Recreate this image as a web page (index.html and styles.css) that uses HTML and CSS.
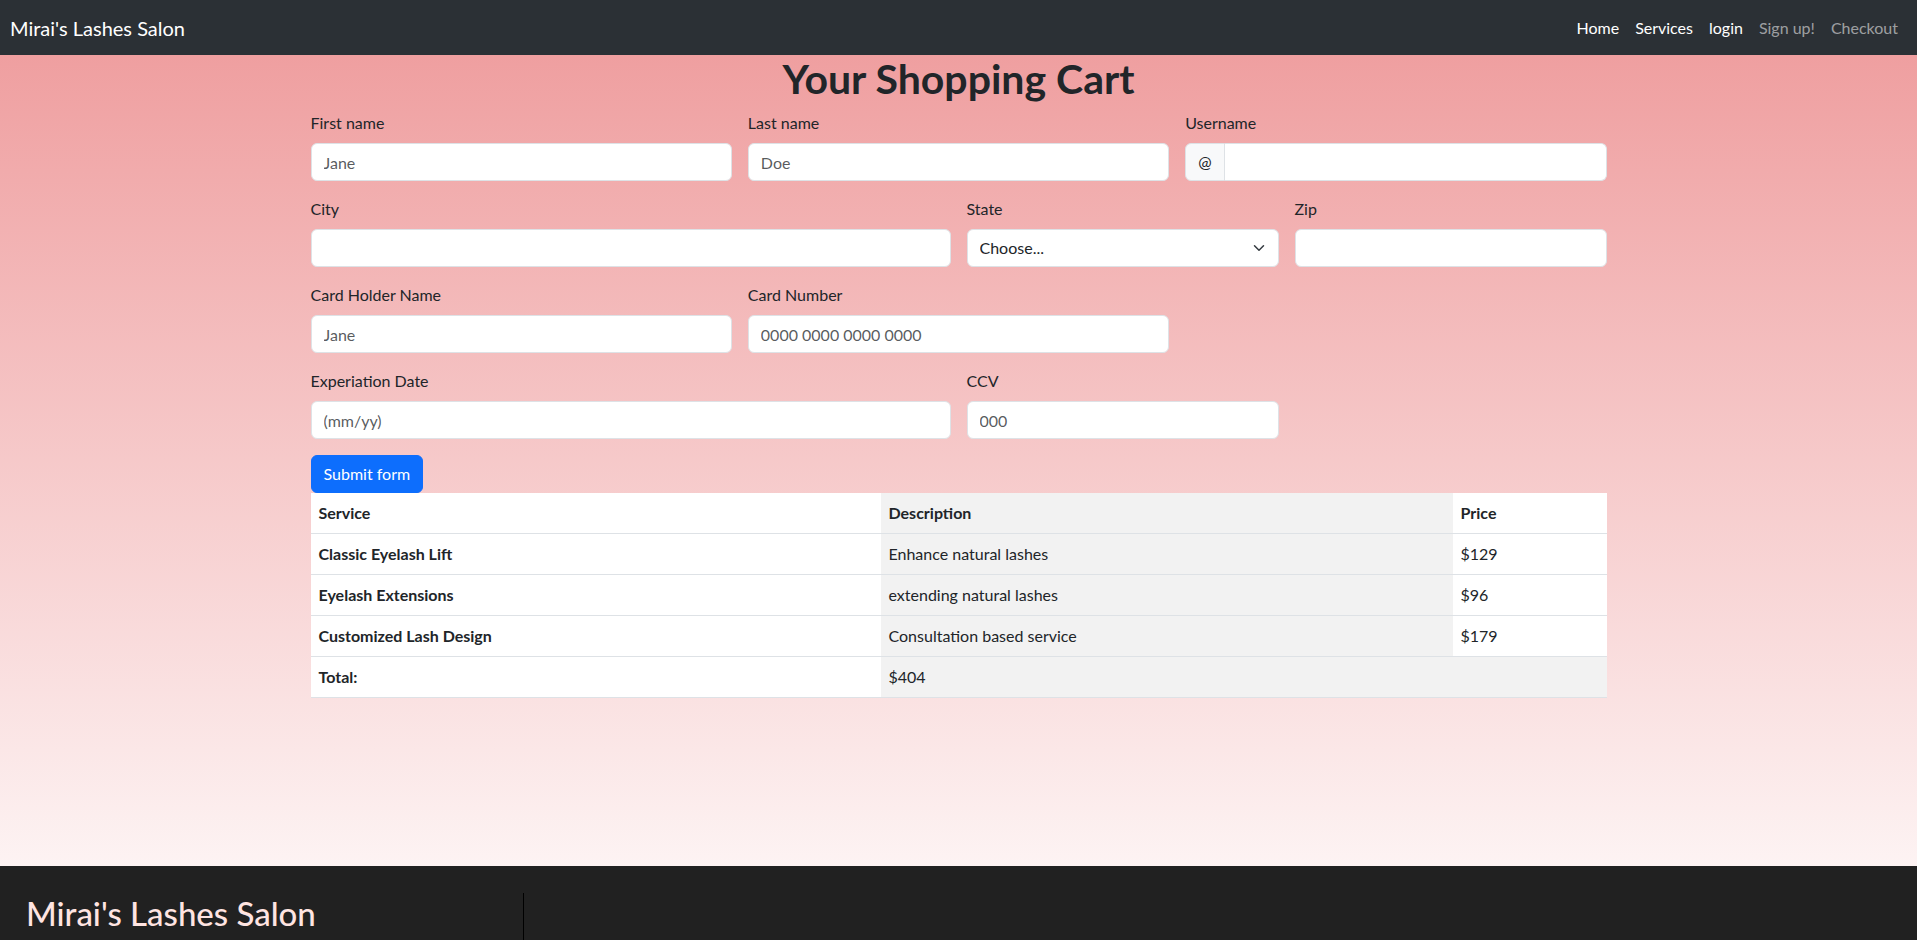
FILE: index.html
```html
<!DOCTYPE html>
<html lang="en">
<head>
<meta charset="utf-8">
<title>Mirai's Lashes Salon - Cart</title>
<link rel="stylesheet" href="styles.css">
</head>
<body>
<nav class="navbar">
  <a class="brand" href="#">Mirai's Lashes Salon</a>
  <ul class="nav-links">
    <li><a class="nav-link" href="#">Home</a></li>
    <li><a class="nav-link" href="#">Services</a></li>
    <li><a class="nav-link" href="#">login</a></li>
    <li><a class="nav-link muted" href="#">Sign up!</a></li>
    <li><a class="nav-link muted" href="#">Checkout</a></li>
  </ul>
</nav>

<main class="main">
  <div class="container">
    <h1 class="title">Your Shopping Cart</h1>
    <form class="form-grid">
      <div class="field span-4 first">
        <label class="label" for="fn">First name</label>
        <input class="control" id="fn" type="text" placeholder="Jane">
      </div>
      <div class="field span-4">
        <label class="label" for="ln">Last name</label>
        <input class="control" id="ln" type="text" placeholder="Doe">
      </div>
      <div class="field span-4">
        <label class="label" for="un">Username</label>
        <div class="input-group">
          <span class="group-text">@</span>
          <input class="control group-control" id="un" type="text">
        </div>
      </div>

      <div class="field span-6 first">
        <label class="label" for="city">City</label>
        <input class="control" id="city" type="text">
      </div>
      <div class="field span-3">
        <label class="label" for="state">State</label>
        <div class="select-wrap">
          <select class="control select" id="state">
            <option>Choose...</option>
          </select>
          <svg class="chevron" width="12" height="12" viewBox="0 0 16 16" aria-hidden="true"><path d="m2 5 6 6 6-6" fill="none" stroke="#343a40" stroke-width="2" stroke-linecap="round" stroke-linejoin="round"/></svg>
        </div>
      </div>
      <div class="field span-3">
        <label class="label" for="zip">Zip</label>
        <input class="control" id="zip" type="text">
      </div>

      <div class="field span-4 first">
        <label class="label" for="chn">Card Holder Name</label>
        <input class="control" id="chn" type="text" placeholder="Jane">
      </div>
      <div class="field span-4">
        <label class="label" for="cn">Card Number</label>
        <input class="control" id="cn" type="text" placeholder="0000 0000 0000 0000">
      </div>

      <div class="field span-6 first">
        <label class="label" for="exp">Experiation Date</label>
        <input class="control" id="exp" type="text" placeholder="(mm/yy)">
      </div>
      <div class="field span-3">
        <label class="label" for="ccv">CCV</label>
        <input class="control" id="ccv" type="text" placeholder="000">
      </div>

      <div class="field span-12 first">
        <button class="btn" type="button">Submit form</button>
      </div>
    </form>

    <table class="cart">
      <thead>
        <tr>
          <th class="c-service">Service</th>
          <th class="c-desc">Description</th>
          <th class="c-price">Price</th>
        </tr>
      </thead>
      <tbody>
        <tr>
          <th class="c-service">Classic Eyelash Lift</th>
          <td class="c-desc">Enhance natural lashes</td>
          <td class="c-price">$129</td>
        </tr>
        <tr>
          <th class="c-service">Eyelash Extensions</th>
          <td class="c-desc">extending natural lashes</td>
          <td class="c-price">$96</td>
        </tr>
        <tr>
          <th class="c-service">Customized Lash Design</th>
          <td class="c-desc">Consultation based service</td>
          <td class="c-price">$179</td>
        </tr>
        <tr>
          <th class="c-service">Total:</th>
          <td class="c-desc" colspan="2">$404</td>
        </tr>
      </tbody>
    </table>
  </div>
</main>

<footer class="footer">
  <div class="footer-col">
    <h2 class="footer-brand">Mirai's Lashes Salon</h2>
  </div>
</footer>
</body>
</html>
```

FILE: styles.css
```css
* {
  box-sizing: border-box;
}

html, body {
  margin: 0;
  padding: 0;
}

body {
  font-family: Lato, "Open Sans", sans-serif;
  font-size: 16px;
  line-height: 1.5;
  color: #212529;
  background: #212121;
}

/* Navbar */
.navbar {
  display: flex;
  align-items: center;
  height: 55px;
  padding: 0 11px 0 10px;
  background: #2b3035;
}

.brand {
  font-size: 20px;
  line-height: 30px;
  color: #fff;
  text-decoration: none;
}

.nav-links {
  display: flex;
  list-style: none;
  margin: 0 0 0 auto;
  padding: 0;
}

.nav-link {
  display: block;
  padding: 8px;
  color: #fff;
  text-decoration: none;
}

.nav-link.muted {
  color: rgba(255, 255, 255, 0.55);
}

/* Main */
.main {
  min-height: 811px;
  background: linear-gradient(180deg, #ef9fa0 0%, #fdf3f3 100%);
}

.container {
  max-width: 1320px;
  margin: 0 auto;
  padding: 0 12px;
}

.title {
  margin: 0 0 8px;
  font-size: 41px;
  font-weight: 700;
  line-height: 48px;
  text-align: center;
}

/* Form */
.form-grid {
  display: grid;
  grid-template-columns: repeat(12, 1fr);
  column-gap: 16px;
  row-gap: 16px;
}

.span-3 { grid-column-end: span 3; }
.span-4 { grid-column-end: span 4; }
.span-6 { grid-column-end: span 6; }
.span-12 { grid-column-end: span 12; }
.first { grid-column-start: 1; }

.label {
  display: block;
  margin-bottom: 8px;
}

.control {
  display: block;
  width: 100%;
  height: 38px;
  padding: 6px 12px;
  font: inherit;
  color: #212529;
  background: #fff;
  border: 1px solid #dee2e6;
  border-radius: 6px;
}

.control::placeholder {
  color: rgba(33, 37, 41, 0.75);
}

.input-group {
  display: flex;
}

.group-text {
  display: flex;
  align-items: center;
  padding: 6px 12px;
  background: #f8f9fa;
  border: 1px solid #dee2e6;
  border-radius: 6px 0 0 6px;
}

.group-control {
  flex: 1;
  min-width: 0;
  border-left: 0;
  border-radius: 0 6px 6px 0;
}

.select-wrap {
  position: relative;
}

.select {
  appearance: none;
  -webkit-appearance: none;
  padding-right: 36px;
}

.chevron {
  position: absolute;
  right: 14px;
  top: 13px;
  pointer-events: none;
}

.btn {
  display: block;
  height: 38px;
  padding: 6px 12px;
  font: inherit;
  color: #fff;
  background: #0d6efd;
  border: 1px solid #0d6efd;
  border-radius: 6px;
}

/* Table */
.cart {
  width: 100%;
  margin-bottom: 16px;
  border-collapse: collapse;
  background: #fff;
}

.cart th,
.cart td {
  padding: 8px;
  text-align: left;
  vertical-align: top;
  border-bottom: 1px solid #dee2e6;
}

.cart th {
  font-weight: 700;
}

.cart td {
  font-weight: 400;
}

.c-service { width: 570px; }
.c-desc { width: 572px; background: #f2f2f2; }

/* Footer */
.footer {
  min-height: 200px;
  padding: 27px 12px 0;
  background: #212121;
}

.footer-col {
  width: 512px;
  min-height: 120px;
  padding-left: 14px;
  border-right: 1px solid #000;
}

.footer-brand {
  margin: 0;
  font-size: 33px;
  font-weight: 500;
  line-height: 40px;
  color: #ffe4e1;
}
```
